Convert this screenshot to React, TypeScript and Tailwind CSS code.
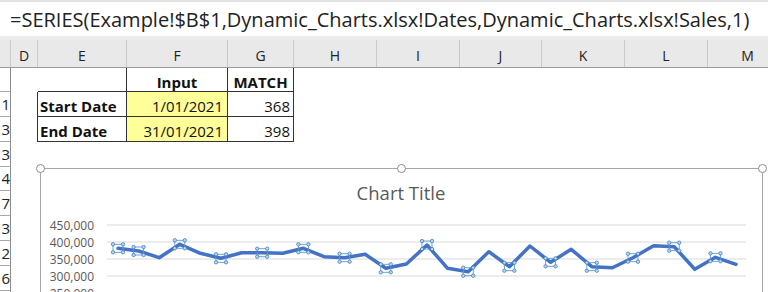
import React from 'react'

const formula = '=SERIES(Example!$B$1,Dynamic_Charts.xlsx!Dates,Dynamic_Charts.xlsx!Sales,1)'

const headers = [
  { label: 'D', w: 'w-[27px]' },
  { label: 'E', w: 'w-[89px]' },
  { label: 'F', w: 'w-[101px]' },
  { label: 'G', w: 'w-[66px]' },
  { label: 'H', w: 'w-[83px]' },
  { label: 'I', w: 'w-[83px]' },
  { label: 'J', w: 'w-[82px]' },
  { label: 'K', w: 'w-[83px]' },
  { label: 'L', w: 'w-[83px]' },
  { label: 'M', w: 'w-[80px]' },
]

const rowNums = ['3', '4', '7', '3', '2', '6', '']

const sales = [
  248.3, 251, 257.7, 244.3, 253.3, 258.3, 252.7, 252.7, 253.3, 248.3, 256.7, 257.7, 254.3, 268.3, 264,
  245, 268.3, 271.7, 251.7, 266.7, 246, 262.3, 249.3, 266.7, 267.7, 257.7, 245.7, 246.7, 269.3, 257.3,
  264.3,
]
const points = sales.map((y, i) => ({ x: 118 + i * 20.6, y }))
const marked = [0, 1, 3, 5, 7, 9, 11, 13, 15, 17, 19, 21, 23, 25, 27, 29]

const gridY = [
  { y: 225, label: '450,000' },
  { y: 242, label: '400,000' },
  { y: 259, label: '350,000' },
  { y: 276, label: '300,000' },
  { y: 293, label: '250,000' },
]

function RowHead({ n }: { n: string }) {
  return (
    <div className="w-[11px] shrink-0 h-full overflow-hidden border-r border-b border-r-[#8c8c8c] border-b-[#a8a8a8] flex items-center justify-end text-[15px] text-[#222]">
      {n}
    </div>
  )
}

function EmptyRow({ n, h }: { n: string; h: string }) {
  return (
    <div className={`flex ${h}`}>
      <RowHead n={n} />
      <div className="flex-1" />
    </div>
  )
}

function Chart() {
  return (
    <div className="absolute left-[40px] top-[168px] w-[723px] h-[140px] bg-white border border-[#a6a6a6]">
      <svg
        className="absolute -left-[1px] -top-[1px]"
        width={723}
        height={125}
        viewBox="40 168 723 125"
      >
        <text
          x={401}
          y={200}
          textAnchor="middle"
          fontSize={18.5}
          fill="#595959"
          fontFamily="'Open Sans', sans-serif"
        >
          Chart Title
        </text>
        {gridY.map((g) => (
          <g key={g.y}>
            <line x1={107} x2={746} y1={g.y} y2={g.y} stroke="#d9d9d9" strokeWidth={1} />
            <text
              x={94}
              y={g.y + 4.5}
              textAnchor="end"
              fontSize={12}
              fill="#595959"
              fontFamily="'Open Sans', sans-serif"
            >
              {g.label}
            </text>
          </g>
        ))}
        <polyline
          points={points.map((p) => `${p.x},${p.y}`).join(' ')}
          fill="none"
          stroke="#4472c4"
          strokeWidth={3.5}
          strokeLinejoin="round"
          strokeLinecap="round"
        />
        {marked.map((i) => {
          const p = points[i]
          const corners = [
            [p.x - 5, p.y - 4],
            [p.x + 5, p.y - 4],
            [p.x - 5, p.y + 4],
            [p.x + 5, p.y + 4],
          ]
          return (
            <g key={i}>
              <rect x={p.x - 5} y={p.y - 4} width={10} height={8} fill="none" stroke="#5b9bd5" strokeWidth={0.9} />
              {corners.map(([cx, cy], k) => (
                <circle key={k} cx={cx} cy={cy} r={1.7} fill="#bdd7ee" stroke="#2e75b6" strokeWidth={0.7} />
              ))}
            </g>
          )
        })}
      </svg>
      {/* selection handles */}
      <span className="absolute -left-[5px] -top-[5px] w-[9px] h-[9px] rounded-full bg-white border border-[#8c8c8c]" />
      <span className="absolute left-[356px] -top-[5px] w-[9px] h-[9px] rounded-full bg-white border border-[#8c8c8c]" />
      <span className="absolute -right-[5px] -top-[5px] w-[9px] h-[9px] rounded-full bg-white border border-[#8c8c8c]" />
    </div>
  )
}

export default function App() {
  return (
    <div className="relative w-[768px] h-[292px] overflow-hidden bg-white font-['Open_Sans',sans-serif] text-[#111]">
      {/* formula bar */}
      <div className="h-[36px] border-t-2 border-[#e2e2e2] pl-[10px] pt-[8px] text-[20px] leading-none whitespace-nowrap text-[#222]">
        {formula}
      </div>
      <div className="h-[4px] bg-[#ececec]" />

      {/* column headers */}
      <div className="flex h-[28px] bg-[#e9e9e9] border-b border-[#9b9b9b] whitespace-nowrap">
        <div className="w-[11px] shrink-0 border-r border-[#c9c9c9]" />
        {headers.map((h) => (
          <div
            key={h.label}
            className={`${h.w} shrink-0 border-r border-[#c9c9c9] flex items-center justify-center pt-[4px] text-[14px] text-[#222]`}
          >
            {h.label}
          </div>
        ))}
      </div>

      {/* row: headers of the little table */}
      <div className="flex h-[24px] text-[15px]">
        <RowHead n="" />
        <div className="w-[27px] shrink-0" />
        <div className="w-[89px] shrink-0 border-r border-b border-[#333]" />
        <div className="w-[101px] shrink-0 border-r border-b border-[#333] flex items-end justify-center pb-[1px] font-bold leading-none">
          Input
        </div>
        <div className="w-[66px] shrink-0 border-r border-b border-[#333] flex items-end justify-center pb-[1px] font-bold leading-none">
          MATCH
        </div>
      </div>

      <div className="flex h-[25px] text-[15px]">
        <RowHead n="1" />
        <div className="w-[27px] shrink-0 border-r border-[#333]" />
        <div className="w-[89px] shrink-0 border-r border-b border-[#333] flex items-end pl-[2px] pb-[2px] font-bold leading-none">
          Start Date
        </div>
        <div className="w-[101px] shrink-0 border-r border-b border-[#333] bg-[#ffff99] flex items-end justify-end pr-[4px] pb-[2px] leading-none">
          1/01/2021
        </div>
        <div className="w-[66px] shrink-0 border-r border-b border-[#333] flex items-end justify-end pr-[3px] pb-[2px] leading-none">
          368
        </div>
      </div>

      <div className="flex h-[25px] text-[15px]">
        <RowHead n="3" />
        <div className="w-[27px] shrink-0 border-r border-[#333]" />
        <div className="w-[89px] shrink-0 border-r border-b border-[#333] flex items-end pl-[2px] pb-[2px] font-bold leading-none">
          End Date
        </div>
        <div className="w-[101px] shrink-0 border-r border-b border-[#333] bg-[#ffff99] flex items-end justify-end pr-[4px] pb-[2px] leading-none">
          31/01/2021
        </div>
        <div className="w-[66px] shrink-0 border-r border-b border-[#333] flex items-end justify-end pr-[3px] pb-[2px] leading-none">
          398
        </div>
      </div>

      {rowNums.map((n, i) => (
        <EmptyRow key={i} n={n} h={i === 1 ? 'h-[24px]' : 'h-[25px]'} />
      ))}

      <Chart />
    </div>
  )
}
